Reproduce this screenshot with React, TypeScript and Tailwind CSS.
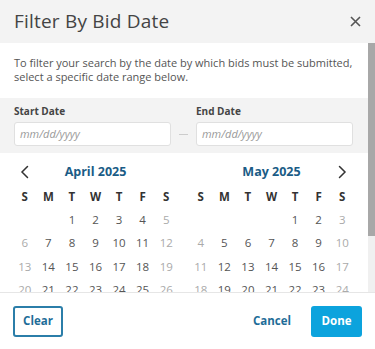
import React from "react";

const WEEK = ["S", "M", "T", "W", "T", "F", "S"];

// build a month grid: leading blanks then day numbers
const monthDays = (offset: number, total: number) => {
  const cells: (number | null)[] = [];
  for (let i = 0; i < offset; i++) cells.push(null);
  for (let d = 1; d <= total; d++) cells.push(d);
  return cells;
};

const ChevronLeft = () => (
  <svg width="10" height="14" viewBox="0 0 10 14" fill="none">
    <path d="M7.5 1.5 L2 7 L7.5 12.5" stroke="#333" strokeWidth="1.5" strokeLinecap="round" />
  </svg>
);

const ChevronRight = () => (
  <svg width="10" height="14" viewBox="0 0 10 14" fill="none">
    <path d="M2.5 1.5 L8 7 L2.5 12.5" stroke="#333" strokeWidth="1.5" strokeLinecap="round" />
  </svg>
);

const Month = ({
  title,
  offset,
  total,
  prev,
  next,
}: {
  title: string;
  offset: number;
  total: number;
  prev?: boolean;
  next?: boolean;
}) => {
  const cells = monthDays(offset, total);
  return (
    <div className="w-[165px]">
      <div className="flex items-center h-[26px]">
        <div className="w-[24px] flex justify-center">{prev && <ChevronLeft />}</div>
        <div className="flex-1 text-center text-[12.5px] font-bold text-[#1a5c86]">{title}</div>
        <div className="w-[24px] flex justify-center">{next && <ChevronRight />}</div>
      </div>
      <div className="grid grid-cols-7">
        {WEEK.map((w, i) => (
          <div key={i} className="h-[23px] flex items-center justify-center text-[11.5px] font-bold text-[#333]">
            {w}
          </div>
        ))}
        {cells.map((d, i) => {
          const weekend = i % 7 === 0 || i % 7 === 6;
          return (
            <div
              key={i}
              className={
                "h-[23.3px] flex items-center justify-center text-[11.5px] " +
                (weekend ? "text-[#aaa]" : "text-[#555]")
              }
            >
              {d ?? ""}
            </div>
          );
        })}
      </div>
    </div>
  );
};

export default function App() {
  return (
    <div
      className="w-[375px] h-[349px] flex flex-col bg-white overflow-hidden"
      style={{ fontFamily: '"Open Sans", "Liberation Sans", sans-serif' }}
    >
      <div className="h-[43px] shrink-0 bg-[#f3f3f3] flex items-center justify-between pl-[14px] pr-[14px]">
        <h2 className="text-[19px] font-normal text-[#444] tracking-[0.2px]">Filter By Bid Date</h2>
        <svg width="11" height="11" viewBox="0 0 11 11">
          <path d="M1 1 L10 10 M10 1 L1 10" stroke="#555" strokeWidth="1.6" />
        </svg>
      </div>

      <div className="flex flex-1 min-h-0">
        <div className="flex-1 overflow-hidden">
          <p className="px-[14px] pt-[13px] text-[11px] leading-[14px] text-[#555]">
            To filter your search by the date by which bids must be submitted, select a specific date range below.
          </p>

          <div className="mt-[14px] bg-[#f3f3f3] px-[14px] pt-[6px] pb-[7px] flex items-end">
            <div className="w-[157px]">
              <div className="text-[10px] font-bold text-[#444] mb-[3px]">Start Date</div>
              <div className="h-[24px] bg-white border border-[#e0e0e0] rounded-[3px] flex items-center px-[5px] text-[11px] italic text-[#999]">
                mm/dd/yyyy
              </div>
            </div>
            <div className="w-[25px] h-[24px] flex items-center justify-center">
              <div className="w-[9px] h-px bg-[#ccc]" />
            </div>
            <div className="w-[157px]">
              <div className="text-[10px] font-bold text-[#444] mb-[3px]">End Date</div>
              <div className="h-[24px] bg-white border border-[#e0e0e0] rounded-[3px] flex items-center px-[5px] text-[11px] italic text-[#999]">
                mm/dd/yyyy
              </div>
            </div>
          </div>

          <div className="flex gap-[11px] pl-[13px] pt-[6px]">
            <Month title="April 2025" offset={2} total={30} prev />
            <Month title="May 2025" offset={4} total={31} next />
          </div>
        </div>
        <div className="w-[7px] shrink-0 bg-[#f0f0f0] flex flex-col">
          <div className="h-[193px] bg-[#a8a8a8]" />
        </div>
      </div>

      <div className="h-[57px] shrink-0 border-t border-[#e6e6e6] flex items-center justify-between px-[13px]">
        <button className="h-[31px] w-[50px] border-2 border-[#2b7ea9] rounded-[3px] text-[11.5px] font-bold text-[#1f6d98]">
          Clear
        </button>
        <div className="flex items-center gap-[20px]">
          <button className="text-[11.5px] font-bold text-[#1f6d98]">Cancel</button>
          <button className="h-[31px] w-[51px] bg-[#0ca3dd] rounded-[3px] text-[11.5px] font-bold text-white">
            Done
          </button>
        </div>
      </div>
    </div>
  );
}
